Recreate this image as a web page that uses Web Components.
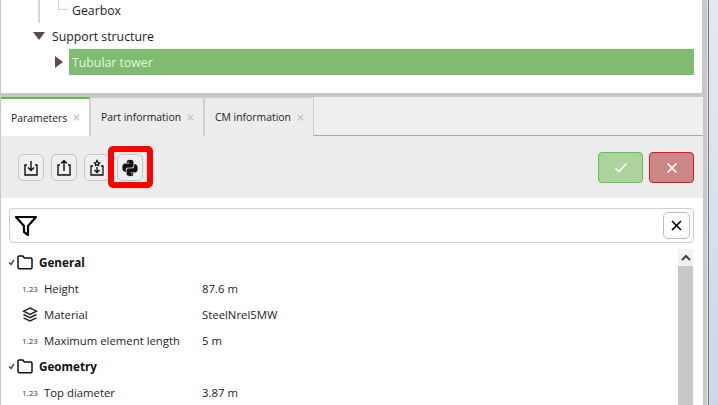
<!DOCTYPE html>
<html>
<head>
<meta charset="utf-8">
<style>
  html, body { margin: 0; height: 100%; overflow: hidden; background: #fff; }
  body { font: 12px "Open Sans", "Noto Sans", sans-serif; color: #1a1a2a; }
</style>
</head>
<body>
<template id="tpl-app">
  <style>
    :host { display: flex; width: 718px; height: 405px; box-sizing: border-box; border-left: 1px solid #c8c8c8; }
    .main { width: 702px; flex: none; display: flex; flex-direction: column; min-height: 0; }
    .lower { border-top: 4px solid #c8c8c8; flex: 1; min-height: 0; display: flex; flex-direction: column; overflow: hidden; }
    .edge { flex: none; width: 4px; background: #c8c8c8; }
    .line { flex: none; width: 1px; background: #e8e8e8; }
    .dark { flex: none; width: 1px; background: #747474; }
    .desk { flex: 1; background: linear-gradient(#e3e9f3, #cbd8e9); }
  </style>
  <div class="main">
    <slot name="tree"></slot>
    <div class="lower"><slot></slot></div>
  </div>
  <div class="edge"></div><div class="line"></div><div class="dark"></div><div class="desk"></div>
</template>

<script>
function cloneTpl(el, id) {
    const $root = el.attachShadow({mode: 'open'});
    $root.appendChild(document.getElementById(id).content.cloneNode(true));
    return $root;
}
function shadowClass(html) {
    return class extends HTMLElement {
        constructor() {
            super();
            this.attachShadow({mode: 'open'}).innerHTML = html;
        }
    };
}

class AppFrame extends HTMLElement {
    constructor() {
        super();
        cloneTpl(this, 'tpl-app');
    }
}

customElements.define('app-frame', AppFrame);

customElements.define('tree-panel', shadowClass(`
  <style>
    :host { display: block; height: 93px; flex: none; overflow: hidden; box-sizing: border-box; padding-right: 8px; border-right: 1px solid #c8c8c8; font-size: 12.3px; }
    .row { height: 26px; display: flex; align-items: center; position: relative; }
    .guide { position: absolute; background: #d9d6d3; }
    .tri { width: 0; height: 0; flex: none; }
    .down { border-left: 6px solid transparent; border-right: 6px solid transparent; border-top: 8px solid #5f4a4a; margin-left: 32px; margin-right: 7px; }
    .right { border-top: 6px solid transparent; border-bottom: 6px solid transparent; border-left: 8px solid #5f4a4a; margin-left: 54px; margin-right: 6px; }
    .sel { flex: 1; height: 26px; line-height: 28px; background: #80bc6f; color: #e6f5e3; padding-left: 3px; }
  </style>
  <div class="row" style="height:23px"><span class="guide" style="left:37px;top:0;width:2px;height:23px"></span>
    <span class="guide" style="left:57px;top:0;width:1px;height:10px"></span>
    <span class="guide" style="left:57px;top:9px;width:10px;height:1px"></span>
    <span style="margin-left:71px;margin-top:-3px">Gearbox</span></div>
  <div class="row"><span class="tri down"></span><span>Support structure</span></div>
  <div class="row"><span class="tri right"></span><span class="sel">Tubular tower</span></div>
`));

customElements.define('tab-item', class extends HTMLElement {
    constructor() {
        super();
        this.attachShadow({mode: 'open'}).innerHTML = `
          <style>
            :host { display: flex; align-items: center; justify-content: space-between; box-sizing: border-box; flex: none; height: 39px; border: 1px solid #cfcfcf; border-bottom: 0; background: #ececec; padding: 0 9px 0 10px; font-size: 10.4px; white-space: nowrap; }
            :host([active]) { background: #fff; border-top: 2px solid #5cb84a; border-left: 0; }
            svg { display: block; flex: none; }
          </style>
          <slot></slot><svg width="7" height="7" viewBox="0 0 7 7" fill="none" stroke="#c4c4c4" stroke-width="1.3"><path d="M.7.7l5.600 5.600M6.300.7L.7 6.300"/></svg>`;
    }
});

customElements.define('tab-bar', shadowClass(`
  <style>
    :host { display: flex; flex: none; background: #efefef; border-bottom: 1px solid #a6a6a6; box-sizing: border-box; height: 39px; }
  </style>
  <slot></slot>
`));

customElements.define('tool-button', shadowClass(`
  <style>
    :host { display: flex; align-items: center; justify-content: center; box-sizing: border-box; width: 26px; height: 27px; border: 1px solid #c4c4c4; border-radius: 5px; background: #efefef; flex: none; position: relative; }
  </style>
  <slot></slot>
`));

customElements.define('action-button', class extends HTMLElement {
    constructor() {
        super();
        this.attachShadow({mode: 'open'}).innerHTML = `
          <style>
            :host { display: flex; align-items: center; justify-content: center; box-sizing: border-box; width: 45px; height: 31px; border-radius: 4px; border: 1px solid #5cc04c; background: #abd49c; flex: none; }
            :host([danger]) { border-color: #e01818; background: #cd8686; }
          </style>
          <slot></slot>`;
    }
});

customElements.define('tool-bar', shadowClass(`
  <style>
    :host { display: flex; align-items: flex-start; box-sizing: border-box; height: 62px; padding: 18px 9px 0 17px; background: #ececec; flex: none; gap: 7px; }
    .sp { flex: 1; }
    .end { display: flex; gap: 6px; margin-top: -2px; }
  </style>
  <slot></slot><span class="sp"></span><span class="end"><slot name="end"></slot></span>
`));

customElements.define('filter-box', shadowClass(`
  <style>
    :host { display: flex; align-items: center; justify-content: space-between; box-sizing: border-box; height: 35px; margin: 10px 9px 6px 8px; border: 1px solid #cfcfcf; border-radius: 4px; padding: 0 3px 0 4px; flex: none; background: #fff; }
    .close { box-sizing: border-box; width: 27px; height: 27px; border: 1px solid #bdbdbd; border-radius: 5px; display: flex; align-items: center; justify-content: center; }
  </style>
  <svg width="24" height="24" viewBox="0 0 24 24" fill="none" stroke="#000" stroke-width="2.200"><path d="M2 3h20l-8 9v9l-4-3v-6z" stroke-linejoin="round"/></svg>
  <span class="close"><svg width="13" height="13" viewBox="0 0 13 13" stroke="#000" stroke-width="1.600"><path d="M2 2l9 9M11 2l-9 9"/></svg></span>
`));

customElements.define('prop-row', class extends HTMLElement {
    constructor() {
        super();
        this.attachShadow({mode: 'open'}).innerHTML = `
          <style>
            :host { display: flex; align-items: center; height: 26px; font-size: 11.35px; }
            .ic { width: 22px; margin-left: 21px; flex: none; font-size: 8px; color: #333; display: flex; align-items: center; white-space: nowrap; }
            .k { width: 158px; flex: none; white-space: nowrap; }
            .v { white-space: nowrap; }
          </style>
          <span class="ic"><slot name="icon">1.23</slot></span>
          <span class="k"><slot></slot></span>
          <span class="v"></span>`;
    }

    connectedCallback() {
        this.shadowRoot.querySelector('.v').textContent = this.getAttribute('value') || '';
    }
});

customElements.define('prop-group', shadowClass(`
  <style>
    :host { display: flex; align-items: center; height: 26px; font-size: 11.7px; font-weight: 700; color: #111; }
    svg { flex: none; }
    .chk { margin-left: 7px; margin-right: 2px; }
    .f { margin-right: 6px; }
  </style>
  <svg class="chk" width="7" height="7" viewBox="0 0 7 7" fill="none" stroke="#555" stroke-width="1.600"><path d="M1 3.500l2 2 3-4.500"/></svg>
  <svg class="f" width="16" height="15" viewBox="0 0 16 15" fill="none" stroke="#111" stroke-width="1.500"><path d="M1 12.500V2.200Q1 1 2.200 1h3.600l1.500 2h6.500Q15 3 15 4.200v8.300q0 1.200-1.200 1.200H2.200Q1 13.700 1 12.500z"/></svg>
  <slot></slot>
`));

customElements.define('prop-list', shadowClass(`
  <style>
    :host { display: block; position: relative; flex: 1; min-height: 0; overflow: hidden; }
    .bar { position: absolute; right: 10px; top: 0; bottom: 0; width: 15px; background: #f2f2f2; }
    .thumb { position: absolute; left: 0; right: 0; top: 17px; bottom: 0; background: #c8c8c8; }
    .up { position: absolute; left: 3px; top: 5px; }
  </style>
  <slot></slot>
  <div class="bar"><svg class="up" width="10" height="7" viewBox="0 0 10 7" fill="none" stroke="#444" stroke-width="2"><path d="M1 6l4-4 4 4"/></svg><div class="thumb"></div></div>
`));

customElements.define('highlight-box', shadowClass(`
  <style>
    :host { display: block; position: absolute; left: -10px; top: -9px; box-sizing: border-box; width: 45px; height: 42px; border: 6px solid #f00; border-radius: 5px; pointer-events: none; }
  </style>
`));
</script>

<app-frame>
  <tree-panel slot="tree"></tree-panel>
  <tab-bar>
    <tab-item active style="width:89px">Parameters</tab-item>
    <tab-item style="width:114px">Part information</tab-item>
    <tab-item style="width:110px">CM information</tab-item>
  </tab-bar>
  <tool-bar>
    <tool-button><svg width="18" height="18" viewBox="0 0 18 18" fill="none" stroke="#111" stroke-width="1.400"><path d="M5 6H3v10h12V6h-2M9 2v9M6 8.500l3 3 3-3"/></svg></tool-button>
    <tool-button><svg width="18" height="18" viewBox="0 0 18 18" fill="none" stroke="#111" stroke-width="1.400"><path d="M5 6H3v10h12V6h-2M9 12V2M6 4.500l3-3 3 3"/></svg></tool-button>
    <tool-button><svg width="18" height="18" viewBox="0 0 18 18" fill="none" stroke="#111" stroke-width="1.300"><path d="M5 7H3v9h12V7h-2M9 8v5M6.500 11l2.500 2.500 2.500-2.500M9 1.500l1 2 1.500.5-1.200 1.200.2 1.300L9 6l-1.500.5.2-1.300L6.500 4 8 3.500z"/></svg></tool-button>
    <tool-button><svg width="18" height="18" viewBox="0 0 18 18" fill="#111" stroke="#111" stroke-width=".3"><path d="M8.900 1C5.800 1 6 2.300 6 2.300V4h3v.7H3.800S1.500 4.500 1.500 8.600c0 4 2 3.900 2 3.900h1.300v-1.900s-.1-2.100 2-2.100h3.500s2 0 2-1.900V2.900S12.600 1 8.900 1zM7.200 2.200a.7.700 0 1 1 0 1.400.7.700 0 0 1 0-1.400z"/><path d="M9.100 17c3.100 0 2.900-1.300 2.900-1.300V14H9v-.7h5.200s2.300.2 2.300-3.900c0-4-2-3.900-2-3.900h-1.300v1.900s.1 2.100-2 2.100H7.700s-2 0-2 1.900v3.700S5.400 17 9.100 17zm1.700-1.200a.7.700 0 1 1 0-1.400.7.700 0 0 1 0 1.400z"/></svg><highlight-box></highlight-box></tool-button>
    <action-button slot="end"><svg width="14" height="11" viewBox="0 0 14 11" fill="none" stroke="#fff" stroke-width="1.600"><path d="M1.500 6l3.500 3.500 7.500-8"/></svg></action-button>
    <action-button slot="end" danger><svg width="12" height="12" viewBox="0 0 12 12" fill="none" stroke="#fff" stroke-width="1.600"><path d="M1.500 1.500l9 9M10.500 1.500l-9 9"/></svg></action-button>
  </tool-bar>
  <filter-box></filter-box>
  <prop-list>
    <prop-group>General</prop-group>
    <prop-row value="87.6 m">Height</prop-row>
    <prop-row value="SteelNrel5MW"><svg slot="icon" width="16" height="15" viewBox="0 0 16 15" fill="none" stroke="#222" stroke-width="1.400"><path d="M8 1l6.500 3.200L8 7.400 1.500 4.200zM1.500 7.500L8 10.700l6.500-3.200M1.500 10.800L8 14l6.500-3.200"/></svg>Material</prop-row>
    <prop-row value="5 m">Maximum element length</prop-row>
    <prop-group>Geometry</prop-group>
    <prop-row value="3.87 m">Top diameter</prop-row>
  </prop-list>
</app-frame>
</body>
</html>
